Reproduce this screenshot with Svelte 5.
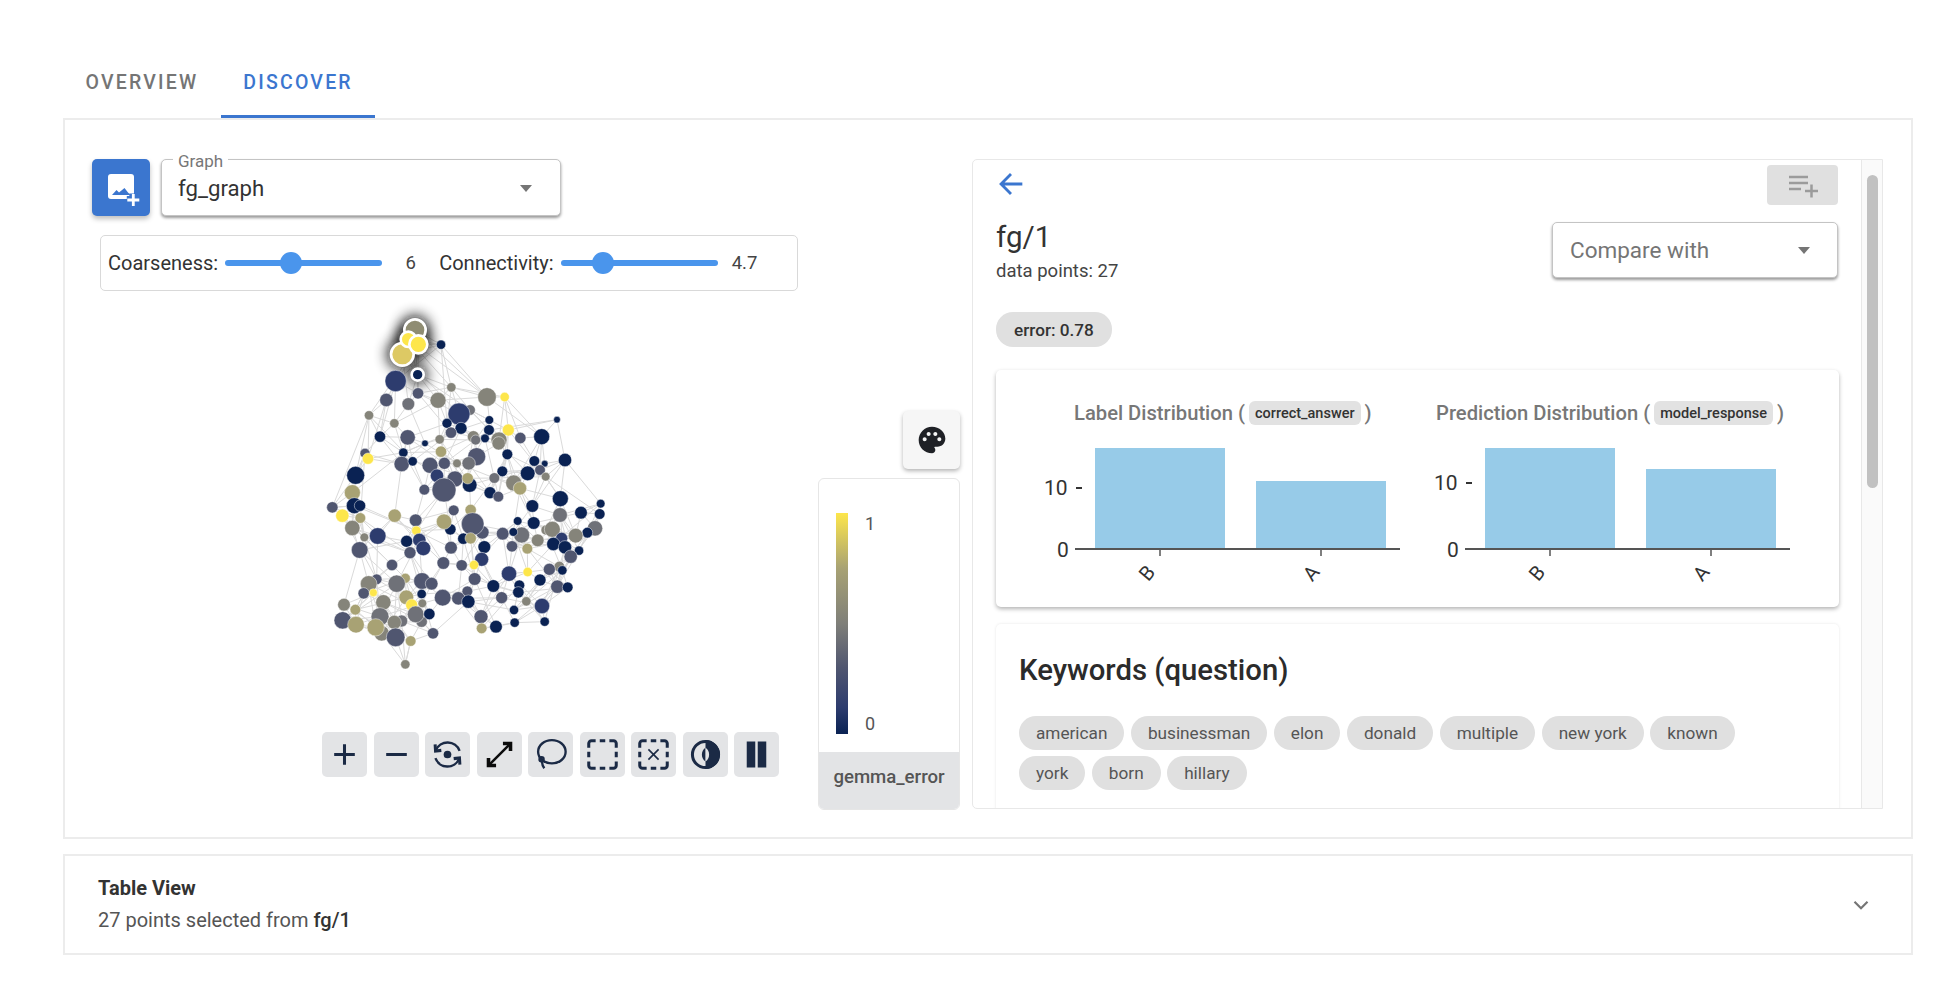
<script>
  const C = { n:'#0a2253', b:'#2d3c6e', s:'#505670', g:'#6f7178', o:'#85847a', k:'#a8a274', y:'#fde64b', l:'#ddc964', t:'#8f8c72' };
  const raw = `287,243,32,b 354,280,17,s 454,262,14,o 561,291,28,o 614,291,14,y 259,300,20,s 325,312,19,g 414,301,24,o 207,346,14,o 283,370,14,o 510,330,16,g 477,342,33,b 568,360,13,n 771,359,10,n 441,370,15,n 483,385,18,n 567,390,16,n 453,398,17,s 625,390,18,y 240,410,17,n 323,412,23,s 419,418,14,o 520,410,18,o 555,415,13,n 527,420,15,g 597,420,24,o 596,430,20,o 661,414,17,s 725,410,24,n 375,430,10,n 423,455,17,k 195,460,15,s 204,476,17,y 310,458,14,n 622,463,16,n 530,470,27,s 795,480,20,n 305,492,23,s 338,484,14,n 390,496,24,s 433,490,18,s 471,490,13,o 506,490,20,g 703,483,16,n 734,491,10,n 607,514,16,n 720,510,16,s 683,520,22,n 411,527,20,b 167,526,27,n 737,530,13,o 583,534,16,g 509,555,22,n 465,537,24,s 503,535,17,k 641,549,24,o 660,565,20,k 432,570,36,s 373,569,16,s 157,578,24,k 570,578,18,n 595,590,16,s 781,596,24,n 902,611,13,n 163,617,24,n 180,617,17,n 97,622,17,s 697,618,19,n 843,638,19,n 899,642,16,n 461,631,16,s 512,630,17,k 181,654,16,k 127,647,20,y 780,645,22,g 284,647,20,k 653,663,13,n 701,669,19,n 347,661,19,s 451,688,17,n 432,665,23,k 547,697,20,s 518,672,34,s 157,684,23,o 349,692,14,y 885,685,23,g 862,698,16,n 608,701,19,s 665,705,24,g 640,696,13,n 738,690,15,o 757,688,24,o 827,707,22,o 233,708,25,b 193,712,13,o 490,716,17,n 512,715,17,k 320,724,18,n 358,720,20,b 713,721,19,o 785,715,18,b 760,732,20,n 795,742,20,n 370,745,22,b 553,741,19,n 636,739,17,s 453,743,19,s 179,750,25,s 682,746,16,k 330,758,18,s 837,752,14,n 812,770,20,s 545,778,21,b 430,789,19,s 522,795,14,y 276,795,17,s 485,796,17,s 683,816,14,y 778,800,16,o 748,808,18,s 787,811,14,n 627,821,23,b 524,837,19,s 720,840,18,n 230,838,16,s 316,835,15,k 206,852,25,o 290,851,26,g 366,843,25,s 395,851,19,s 580,858,19,n 658,856,16,n 772,860,20,s 803,862,16,n 655,877,17,n 191,880,17,s 220,878,12,y 365,882,14,n 502,874,16,s 428,893,25,s 319,892,22,k 605,893,18,s 475,895,20,s 505,905,20,n 250,907,23,o 132,914,19,o 335,915,18,y 367,910,13,o 679,904,14,o 726,918,23,b 166,929,16,k 642,930,14,n 240,950,27,g 365,965,17,g 347,943,25,g 388,942,17,n 543,950,21,s 128,961,26,s 168,974,25,k 305,963,18,g 283,967,21,o 644,968,14,n 734,965,14,n 588,980,19,n 245,1000,23,o 227,982,26,k 545,985,16,k 287,1012,28,s 399,1000,17,s 332,1023,16,k 316,1093,14,o`;
  const nodes = raw.split(' ').map((e) => { const [x, y, r, c] = e.split(','); return { x: +x, y: +y, r: +r, c: C[c] }; });
  const top = [[345,90,28,C.t],[307,163,30,C.l],[325,118,19,C.y],[355,133,23,C.y],[353,224,14,C.n]].map(([x,y,r,c]) => ({ x, y, r, c }));
  const free = [{ x:423, y:134, r:14, c:C.n }];
  const all = [...top, ...free, ...nodes];
  const seen = new Set();
  const edges = [];
  all.forEach((a, i) => {
    const near = all.map((b, j) => ({ j, d: Math.hypot(a.x - b.x, a.y - b.y) })).filter((o) => o.j !== i && o.d > 40).sort((p, q) => p.d - q.d);
    [near[0], near[2], near[5], near[14]].forEach((o) => {
      const key = Math.min(i, o.j) + '-' + Math.max(i, o.j);
      if (!seen.has(key)) { seen.add(key); edges.push([a.x, a.y, all[o.j].x, all[o.j].y]); }
    });
  });
  edges.push([423,134,561,291],[353,224,454,262],[561,291,725,410],[795,480,902,611],[316,1093,332,1023],[132,914,179,750],[97,622,207,346]);

  const keywords = [['american','businessman','elon','donald','multiple','new york','known'],['york','born','hillary']];
  const charts = [
    { title: 'Label Distribution (', pill: 'correct_answer', a: 481, tick: 487, cls: 'c1' },
    { title: 'Prediction Distribution (', pill: 'model_response', a: 469, tick: 482, cls: 'c2' }
  ];
</script>

<div class="page">
  <nav class="tabs">
    <span class="tab">OVERVIEW</span>
    <span class="tab active">DISCOVER</span>
  </nav>

  <section class="panel">
    <div class="left">
      <div class="graph-row">
        <button class="add-btn" aria-label="add graph">
          <svg width="40" height="40" viewBox="0 0 40 40">
            <rect x="7" y="6" width="26" height="25" rx="3" fill="#fff"/>
            <path d="M11 27l4.500-5 2.500 2.500 5.500-4.500 3.500 4.500 2.500 2.500z" fill="#3b76cf"/>
            <path d="M32.300 25.500v13M25.800 32h13" fill="none" stroke="#3b76cf" stroke-width="8"/>
            <path d="M32.300 26v12M26.300 32h12" fill="none" stroke="#fff" stroke-width="2.800"/>
          </svg>
        </button>
        <div class="select graph-select">
          <span class="legend-label">Graph</span>
          <span class="select-value">fg_graph</span>
          <span class="caret"></span>
        </div>
      </div>

      <div class="sliders">
        <span class="s-label">Coarseness:</span>
        <span class="slider"><span class="thumb t1"></span></span>
        <span class="s-val v1">6</span>
        <span class="s-label">Connectivity:</span>
        <span class="slider"><span class="thumb t2"></span></span>
        <span class="s-val v2">4.7</span>
      </div>

      <div class="graph-area">
        <div class="canvas-col">
          <svg class="graph" width="340" height="380" viewBox="0 0 1020 1140">
            <defs>
              <filter id="glow" x="-200%" y="-200%" width="500%" height="500%"><feGaussianBlur stdDeviation="20"/></filter>
            </defs>
            {#each edges as e}
              <line x1={e[0]} y1={e[1]} x2={e[2]} y2={e[3]} stroke="#dadada" stroke-width="3"/>
            {/each}
            {#each top as n}
              <circle cx={n.x} cy={n.y} r={n.r + 16} fill="#111" opacity="0.9" filter="url(#glow)"/>
            {/each}
            {#each nodes as n}
              <circle cx={n.x} cy={n.y} r={n.r} fill={n.c} stroke="#fff" stroke-opacity="0.55" stroke-width="2.500"/>
            {/each}
            <circle cx="423" cy="134" r="14" fill={C.n} stroke="#fff" stroke-opacity="0.55" stroke-width="2.500"/>
            {#each top as n}
              <circle cx={n.x} cy={n.y} r={n.r + 4} fill={n.c} stroke="#fff" stroke-width="8"/>
            {/each}
          </svg>
          <div class="toolbar">
            <button class="tool" aria-label="zoom in"><svg viewBox="0 0 24 24"><path d="M12 4.500v15M4.500 12h15" class="st"/></svg></button>
            <button class="tool" aria-label="zoom out"><svg viewBox="0 0 24 24"><path d="M4.500 12h15" class="st"/></svg></button>
            <button class="tool" aria-label="reset"><svg viewBox="0 0 24 24"><circle cx="12" cy="12" r="2.800" fill="#1b2a45"/><path d="M3.500 9A9.300 9.300 0 0 1 20.800 9.300M20.500 15A9.300 9.300 0 0 1 3.200 14.700" class="st thin"/><path d="M3 4.700l.3 4.800 4.200-.5M21 19.300l-.3-4.800-4.200.5" class="st"/></svg></button>
            <button class="tool" aria-label="fit"><svg viewBox="0 0 24 24"><path d="M5 19L19 5" class="st black shaft"/><path d="M14.500 4h5.500v5.500M4 14.500v5.500h5.500" class="st black"/></svg></button>
            <button class="tool" aria-label="lasso"><svg viewBox="0 0 24 24"><ellipse cx="13" cy="10" rx="10" ry="8.500" class="st thin"/><circle cx="5.500" cy="15.500" r="1.500" class="st thin"/><path d="M5.800 17c0 2 .6 3.500 1.700 5" class="st thin"/></svg></button>
            <button class="tool" aria-label="select"><svg viewBox="0 0 24 24"><path d="M2 7V4a2 2 0 0 1 2-2h3M10 2h4M17 2h3a2 2 0 0 1 2 2v3M22 10v4M22 17v3a2 2 0 0 1-2 2h-3M14 22h-4M7 22H4a2 2 0 0 1-2-2v-3M2 14v-4" class="st"/></svg></button>
            <button class="tool" aria-label="deselect"><svg viewBox="0 0 24 24"><path d="M2 7V4a2 2 0 0 1 2-2h3M10 2h4M17 2h3a2 2 0 0 1 2 2v3M22 10v4M22 17v3a2 2 0 0 1-2 2h-3M14 22h-4M7 22H4a2 2 0 0 1-2-2v-3M2 14v-4" class="st"/><path d="M8.300 8.300l7.400 7.400M15.700 8.300l-7.400 7.400" class="st hair"/></svg></button>
            <button class="tool" aria-label="contrast"><svg viewBox="0 0 24 24"><circle cx="12" cy="12" r="9.500" class="st"/><path d="M12 1.500a10.500 10.500 0 0 1 0 21z" fill="#1b2a45"/><path d="M12 7c-3.500 2-3.500 8 0 10z" fill="#1b2a45"/><path d="M12 7c3.500 2 3.500 8 0 10z" fill="#e3e4e6"/></svg></button>
            <button class="tool" aria-label="pause"><svg viewBox="0 0 24 24"><path d="M4.900 2.500h6.200v19H4.900zM12.900 2.500h6.200v19h-6.200z" fill="#1b2a45"/></svg></button>
          </div>
        </div>

        <div class="legend-col">
          <button class="palette" aria-label="palette">
            <svg width="32" height="32" viewBox="0 0 24 24"><path fill="#1f2126" d="M12 2C6.490 2 2 6.490 2 12s4.490 10 10 10c1.380 0 2.500-1.120 2.500-2.500 0-.61-.23-1.200-.64-1.670-.08-.1-.13-.21-.13-.33 0-.28.22-.5.5-.5H16c3.310 0 6-2.690 6-6 0-4.960-4.490-9-10-9zm5.500 11c-.83 0-1.500-.67-1.500-1.500s.67-1.500 1.500-1.500 1.500.67 1.500 1.500-.67 1.500-1.500 1.500zm-3-4c-.83 0-1.500-.67-1.500-1.500S13.670 6 14.500 6s1.500.67 1.500 1.500S15.330 9 14.500 9zM5 11.500c0-.83.67-1.500 1.500-1.500s1.500.67 1.500 1.500S7.330 13 6.500 13 5 12.330 5 11.500zm6-4c0 .83-.67 1.500-1.500 1.500S8 8.330 8 7.500 8.670 6 9.500 6s1.500.67 1.500 1.500z"/></svg>
          </button>
          <div class="legend">
            <div class="legend-body">
              <div class="ramp"></div>
              <div class="ramp-labels"><span>1</span><span>0</span></div>
            </div>
            <div class="legend-foot">gemma_error</div>
          </div>
        </div>
      </div>
    </div>

    <aside class="detail">
      <div class="scroll">
        <div class="head-row">
          <svg class="back" width="34" height="34" viewBox="0 0 24 24"><path d="M20 12H5M12 5l-7 7 7 7" fill="none" stroke="#3b76cf" stroke-width="2"/></svg>
          <button class="addlist" aria-label="add to list">
            <svg width="34" height="28" viewBox="0 0 34 28"><path d="M3 6h19M3 12h19M3 18h12M19 20h13M25.500 13.500v13" fill="none" stroke="#9b9b9b" stroke-width="2.500"/></svg>
          </button>
        </div>
        <div class="title-row">
          <div>
            <h2>fg/1</h2>
            <p class="points">data points: 27</p>
          </div>
          <div class="select compare">
            <span class="compare-text">Compare with</span>
            <span class="caret"></span>
          </div>
        </div>
        <span class="chip strong">error: 0.78</span>

        <div class="card charts">
          {#each charts as c}
            <div class="chart {c.cls}">
              <div class="chart-title">{c.title}<span class="pill">{c.pill}</span>)</div>
              <svg width="400" height="134" viewBox="0 448 400 134">
                <rect x="59" y="448" width="130" height="101" fill="#97cbe8"/>
                <rect x="220" y={c.a} width="130" height={549 - c.a} fill="#97cbe8"/>
                <path d="M39 549h325" stroke="#555" stroke-width="2"/>
                <path d="M124 549v7M285 549v7" stroke="#555" stroke-width="1.500"/>
                <text x="8" y={c.tick + 7.5} class="ax">10</text>
                <path d={`M40 ${c.tick + 1}h6`} stroke="#333" stroke-width="2"/>
                <text x="21" y="557" class="ax">0</text>
                <text transform="translate(111 573) rotate(-50)" text-anchor="middle" dominant-baseline="central" class="ax small">B</text>
                <text transform="translate(275 573) rotate(-50)" text-anchor="middle" dominant-baseline="central" class="ax small">A</text>
              </svg>
            </div>
          {/each}
        </div>

        <div class="card keywords">
          <h3>Keywords (question)</h3>
          {#each keywords as row}
            <div class="chip-row">
              {#each row as k}<span class="chip">{k}</span>{/each}
            </div>
          {/each}
        </div>
      </div>
      <div class="track"><div class="scroll-thumb"></div></div>
    </aside>
  </section>

  <section class="table-panel">
    <div>
      <div class="t-title">Table View</div>
      <div class="t-sub">27 points selected from <b>fg/1</b></div>
    </div>
    <svg width="26" height="26" viewBox="0 0 24 24"><path d="M6 9l6 6 6-6" fill="none" stroke="#757575" stroke-width="2"/></svg>
  </section>
</div>

<style>
  :global(body) { margin: 0; background: #fff; }
  * { box-sizing: border-box; }
  .page { width: 1958px; height: 996px; padding: 0 45px 0 63px; font-family: Roboto, "Liberation Sans", sans-serif; color: #333; overflow: hidden; }
  button { border: 0; padding: 0; display: flex; align-items: center; justify-content: center; }

  .tabs { height: 118px; display: flex; align-items: flex-end; }
  .tab { height: 74px; display: flex; align-items: center; padding: 5px 22.500px 0; font-size: 19.500px; font-weight: 500; letter-spacing: 2.200px; color: #757575; border-bottom: 3px solid transparent; }
  .tab.active { color: #3b76cf; border-bottom-color: #3b76cf; }

  .panel { height: 721px; border: 2px solid #ececec; padding: 39px 28px 28px 27px; display: flex; gap: 12px; }
  .left { width: 868px; flex: none; }
  .graph-row { display: flex; gap: 11px; }
  .add-btn { width: 58px; height: 57px; background: #3b76cf; border-radius: 5px; box-shadow: 0 3px 5px rgba(0,0,0,.25); }
  .select { position: relative; background: #fff; border: 1px solid #c4c4c4; border-radius: 5px; box-shadow: 0 2px 3px rgba(0,0,0,.4); display: flex; align-items: center; }
  .graph-select { width: 400px; height: 57px; padding-left: 16px; }
  .legend-label { position: absolute; left: 11px; top: -8px; padding: 0 5px; background: #fff; font-size: 17px; line-height: 18px; color: #777; }
  .select-value { font-size: 22.200px; color: #333; }
  .caret { position: absolute; right: 28px; top: 50%; margin-top: -3px; border: 6.500px solid transparent; border-top: 7px solid #757575; border-bottom: 0; }

  .sliders { margin: 19px 0 0 8px; width: 698px; height: 56px; border: 1px solid #d9d9d9; border-radius: 5px; display: flex; align-items: center; padding: 0 0 1px 7px; font-size: 20px; color: #333; }
  .s-label { white-space: nowrap; }
  .slider { position: relative; width: 157px; height: 6px; border-radius: 3px; background: #4a95ec; margin-left: 7px; flex: none; }
  .thumb { position: absolute; top: -8px; width: 22px; height: 22px; border-radius: 50%; background: #4a95ec; }
  .t1 { left: 55px; }
  .t2 { left: 31px; }
  .s-val { text-align: center; font-size: 18.500px; color: #444; }
  .v1 { width: 57px; }
  .v2 { width: 54px; }

  .graph-area { display: flex; }
  .canvas-col { width: 726px; flex: none; }
  .graph { display: block; margin: 9px 0 0 208px; }
  .toolbar { display: flex; gap: 6.500px; margin: 52px 0 0 230px; }
  .tool { width: 45px; height: 45px; background: #e3e4e6; border-radius: 5px; }
  .tool svg { width: 33px; height: 33px; }
  .st { fill: none; stroke: #1b2a45; stroke-width: 2.200; }
  .st.thin { stroke-width: 1.700; }
  .st.hair { stroke-width: 1.200; }
  .st.black { stroke: #0b0b0b; stroke-width: 2.600; }
  .st.shaft { stroke-width: 1.800; }

  .legend-col { width: 142px; flex: none; padding-top: 120px; display: flex; flex-direction: column; align-items: flex-end; }
  .palette { width: 57px; height: 58px; background: #f6f6f6; border-radius: 5px; box-shadow: 0 2px 4px rgba(0,0,0,.3); }
  .legend { width: 142px; height: 332px; margin-top: 9px; border: 1px solid #e6e6e6; border-radius: 6px; overflow: hidden; display: flex; flex-direction: column; }
  .legend-body { flex: 1; display: flex; padding: 34px 0 0 17px; }
  .ramp { width: 12px; height: 221px; background: linear-gradient(#fde64b, #a8a274 25%, #7f7f79 50%, #505670 70%, #2d3c6e 88%, #0a2253); }
  .ramp-labels { height: 221px; padding-top: 1px; margin-left: 17px; display: flex; flex-direction: column; justify-content: space-between; font-size: 18px; color: #555; line-height: 20px; }
  .legend-foot { height: 57px; padding-bottom: 8px; background: #e3e4e6; display: flex; align-items: center; justify-content: center; font-size: 18.600px; font-weight: 500; color: #555; }

  .detail { width: 911px; height: 650px; border: 1px solid #e8e8e8; border-radius: 5px 0 0 5px; display: flex; overflow: hidden; }
  .scroll { width: 888px; flex: none; padding: 5px 23px 0 23px; overflow: hidden; }
  .track { width: 22px; flex: none; border-left: 1px solid #e8e8e8; background: #fafafa; padding: 15px 0 0 5px; }
  .scroll-thumb { width: 11px; height: 313px; border-radius: 6px; background: #c1c1c1; }

  .head-row { display: flex; justify-content: space-between; height: 40px; }
  .back { margin: 2px 0 0 -2px; }
  .addlist { width: 71px; height: 40px; background: #e0e0e0; border-radius: 4px; }
  .title-row { display: flex; justify-content: space-between; margin-top: 17px; height: 90px; }
  h2 { margin: 0; font-size: 29.500px; font-weight: 400; line-height: 30px; color: #333; }
  .points { margin: 9px 0 0; font-size: 18.500px; line-height: 20px; color: #444; }
  .compare { width: 286px; height: 56px; padding-left: 17px; }
  .compare-text { font-size: 22.500px; color: #757575; }
  .compare .caret { right: 27px; }

  .chip { display: inline-flex; align-items: center; height: 34px; padding: 0 17px; border-radius: 17px; background: #e0e0e0; font-size: 17.200px; color: #555; white-space: nowrap; }
  .chip.strong { height: 35px; padding: 0 18px; font-size: 17.200px; font-weight: 500; color: #333; }

  .card { background: #fff; border-radius: 5px; box-shadow: 0 2px 4px rgba(0,0,0,.3); width: 843px; }
  .charts { height: 237px; margin-top: 23px; display: flex; padding: 29px 0 0 78px; }
  .chart { width: 362px; flex: none; }
  .chart-title { font-size: 20.200px; font-weight: 500; color: #777; display: flex; align-items: center; height: 28px; white-space: nowrap; }
  .pill { margin: 0 4px; padding: 0 6px; height: 24px; display: inline-flex; align-items: center; background: #e2e2e2; border-radius: 6px; font-size: 14.500px; color: #333; }
  .chart svg { display: block; margin-top: 21px; overflow: visible; }
  .c1 svg { margin-left: -38px; }
  .c2 svg { margin-left: -10px; }
  .ax { font-family: Roboto, sans-serif; font-size: 21px; fill: #333; }
  .ax.small { font-size: 20px; }

  .keywords { margin-top: 17px; height: 300px; padding: 28px 23px; box-shadow: 0 0 3px rgba(0,0,0,.1); }
  h3 { margin: 0 0 28px; font-size: 29.300px; font-weight: 500; line-height: 36px; color: #2b2b2b; }
  .chip-row { display: flex; gap: 6.500px; margin-bottom: 6px; }

  .table-panel { height: 101px; margin-top: 15px; border: 2px solid #ececec; display: flex; align-items: center; justify-content: space-between; padding: 0 37px 0 33px; }
  .t-title { font-size: 20px; font-weight: 700; color: #333; line-height: 26px; margin-top: -2px; }
  .t-sub { font-size: 20px; color: #555; line-height: 26px; margin-top: 6px; }
  .t-sub b { font-weight: 500; color: #333; }
</style>
